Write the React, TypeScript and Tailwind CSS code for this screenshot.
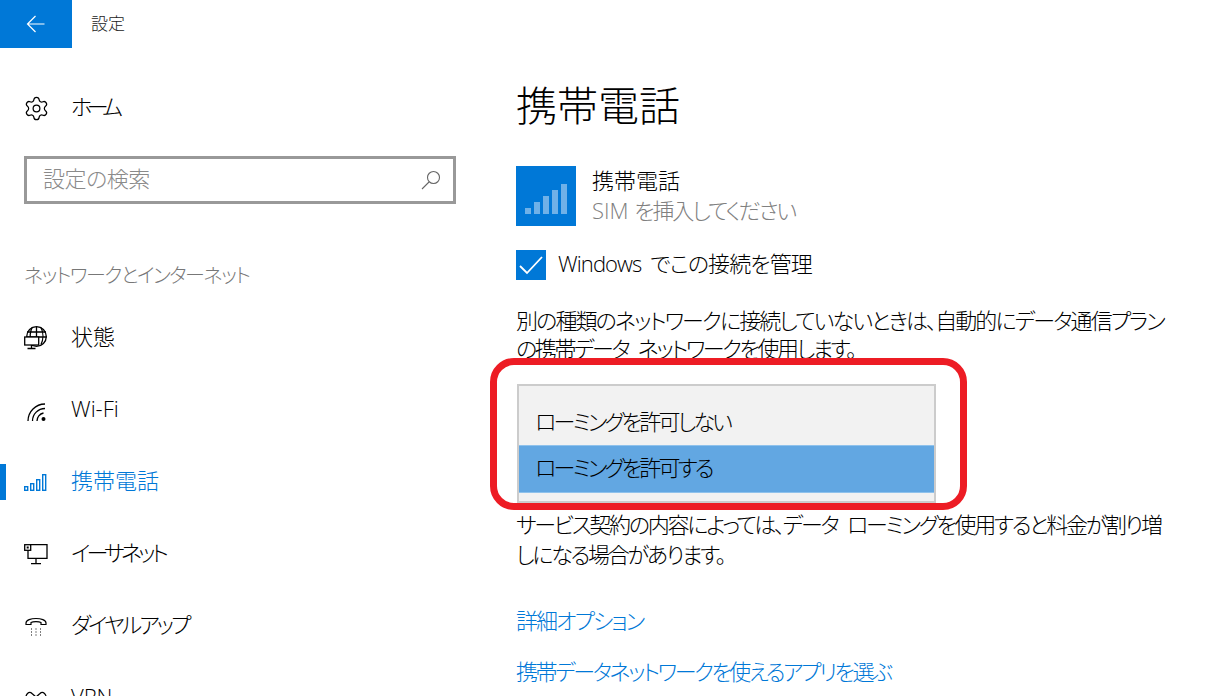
import { ReactNode } from 'react';
import { Settings } from 'lucide-react';

const FONT = '"Open Sans", "Noto Sans CJK JP", sans-serif';

function SignalBars() {
  return (
    <svg width="24" height="20" viewBox="0 0 24 20" fill="none" stroke="currentColor" strokeWidth="1.4">
      <rect x="0.7" y="14.700" width="3" height="3.600" />
      <rect x="6.700" y="11.700" width="3" height="6.600" />
      <rect x="12.700" y="7.700" width="3" height="10.600" />
      <rect x="18.700" y="2.700" width="3" height="15.600" />
    </svg>
  );
}

function StatusIcon() {
  return (
    <svg width="24" height="24" viewBox="0 0 24 24" fill="none" stroke="currentColor" strokeWidth="1.300">
      <circle cx="12.500" cy="10.500" r="9.800" />
      <path d="M3 6h19M2.700 11h20M8 1.500c-2 5-2 10-.5 12M17 1.500c2.500 5 2.500 12 0 17M12.500 .7v10" />
      <rect x="0.700" y="11" width="14" height="8" fill="white" />
      <path d="M7.500 19v3M3.500 22.500h8" />
    </svg>
  );
}

function WifiIcon() {
  return (
    <svg width="24" height="24" viewBox="0 0 24 24" fill="none" stroke="currentColor" strokeWidth="1.300">
      <path d="M4 23A17 17 0 0 1 21 6" />
      <path d="M8.500 23A12.500 12.500 0 0 1 21 10.500" />
      <path d="M13 23A8 8 0 0 1 19.500 15" />
      <circle cx="19.500" cy="21" r="2" fill="currentColor" stroke="none" />
    </svg>
  );
}

function EthernetIcon() {
  return (
    <svg width="24" height="24" viewBox="0 0 24 24" fill="none" stroke="currentColor" strokeWidth="1.300">
      <path d="M6 2.700h17v13.600H4V8" />
      <rect x="0.700" y="2.700" width="6" height="5.600" />
      <rect x="2.700" y="4.500" width="2" height="2" fill="currentColor" stroke="none" />
      <path d="M12 16.500v5M7 21.700h10" />
    </svg>
  );
}

function DialIcon() {
  return (
    <svg width="24" height="24" viewBox="0 0 24 24" fill="none" stroke="currentColor" strokeWidth="1.200">
      <path d="M2 9c0-6 20-6 20 0v1.500h-5V8.500c-2-1.200-8-1.200-10 0v2H2z" />
      <path d="M7 15h1M11.500 15h1M16 15h1M7 18h1M11.500 18h1M16 18h1M7 21h1M11.500 21h1M16 21h1" />
    </svg>
  );
}

function VpnIcon() {
  return (
    <svg width="24" height="24" viewBox="0 0 24 24" fill="none" stroke="currentColor" strokeWidth="1.300">
      <path d="M12 11L8 7.500C6.500 6 5 6 3.500 7.500 1.500 9.500 1.500 12.500 3.500 14.500 5 16 6.500 16 8 14.500L16 7.500C17.500 6 19 6 20.500 7.500 22.500 9.500 22.500 12.500 20.500 14.500 19 16 17.500 16 16 14.500L12 11" />
    </svg>
  );
}

function NavItem({ icon, label, active, tracking }: { icon: ReactNode; label: string; active?: boolean; tracking?: string }) {
  return (
    <div className={`h-[72px] flex items-center pl-6 relative ${active ? 'text-[#0078d7]' : 'text-black'}`}>
      {active && <div className="absolute left-0 top-[18px] w-[6px] h-[36px] bg-[#0078d7]" />}
      <div className="w-6 h-6 flex items-center justify-center mr-[23px] shrink-0">{icon}</div>
      <span className={`text-[22px] leading-[30px] -mt-[5px] font-light ${tracking ?? ''}`}>{label}</span>
    </div>
  );
}

export default function App() {
  return (
    <div
      className="relative w-[1212px] h-[696px] overflow-hidden bg-white flex [font-feature-settings:'palt'] font-light"
      style={{ fontFamily: FONT }}
    >
      {/* Sidebar */}
      <div className="w-[480px] shrink-0">
        <div className="h-12 flex items-center">
          <div className="w-[72px] h-12 bg-[#0078d7] flex items-center justify-center text-white">
            <svg width="20" height="18" viewBox="0 0 20 18" fill="none" stroke="currentColor" strokeWidth="1.200">
              <path d="M18.500 9H1.500M9.500 1L1.500 9l8 8" />
            </svg>
          </div>
          <span className="ml-[19px] text-[17px] text-[#222]">設定</span>
        </div>

        <div className="mt-6 h-[72px] flex items-center pl-6 text-black">
          <Settings size={27} strokeWidth={1.100} className="mr-[21px] -ml-[1px]" />
          <span className="text-[22px] leading-[30px] -mt-1 tracking-[-5.500px]">ホーム</span>
        </div>

        <div className="mt-3 mx-6 h-12 border-[3px] border-[#999] flex items-center justify-between pl-[16px] pr-3">
          <span className="text-[22px] leading-[30px] -mt-1 text-[#8a8a8a] tracking-[-0.5px]">設定の検索</span>
          <svg width="20" height="20" viewBox="0 0 20 20" fill="none" stroke="#666" strokeWidth="1.100">
            <circle cx="12.500" cy="7.500" r="6" />
            <path d="M8 12L1 19" />
          </svg>
        </div>

        <div className="mt-[55px] pl-6 text-[20px] leading-[34px] text-[#777] tracking-[-1.500px]">ネットワークとインターネット</div>

        <div className="mt-[9px]">
          <NavItem icon={<StatusIcon />} label="状態" />
          <NavItem icon={<WifiIcon />} label="Wi-Fi" />
          <NavItem icon={<SignalBars />} label="携帯電話" active />
          <NavItem icon={<EthernetIcon />} label="イーサネット" tracking="tracking-[-3.800px]" />
          <NavItem icon={<DialIcon />} label="ダイヤルアップ" tracking="tracking-[-3px]" />
          <NavItem icon={<VpnIcon />} label="VPN" />
        </div>
      </div>

      {/* Content */}
      <div className="pl-9 w-[690px]">
        <h1 className="mt-[79px] text-[41px] leading-[52px] font-light text-black">携帯電話</h1>

        <div className="mt-[35px] flex items-center">
          <div className="w-[60px] h-[60px] bg-[#0078d7] flex items-end justify-center pb-[12px] gap-[3px]">
            <div className="w-[6px] h-[6px] bg-[#6fb1e8]" />
            <div className="w-[6px] h-[12px] bg-[#6fb1e8]" />
            <div className="w-[6px] h-[18px] bg-[#6fb1e8]" />
            <div className="w-[6px] h-[24px] bg-[#6fb1e8]" />
            <div className="w-[6px] h-[30px] bg-[#6fb1e8]" />
          </div>
          <div className="ml-4 -mt-[2px]">
            <div className="text-[22px] leading-[30px] text-black">携帯電話</div>
            <div className="text-[22px] leading-[30px] text-[#808080] tracking-[-2.100px]">
              <span className="tracking-normal">SIM </span>を挿入してください
            </div>
          </div>
        </div>

        <div className="mt-6 flex items-center">
          <div className="w-[30px] h-[30px] bg-[#0078d7] flex items-center justify-center text-white">
            <svg width="26" height="20" viewBox="0 0 26 20" fill="none" stroke="currentColor" strokeWidth="1.800">
              <path d="M2 11l7 7L24 2" />
            </svg>
          </div>
          <span className="ml-3 -mt-1 text-[22px] leading-[30px] text-black tracking-[-0.900px] [word-spacing:4px]">Windows でこの接続を管理</span>
        </div>

        <p className="mt-[26px] whitespace-nowrap text-[22px] leading-[28px] text-black tracking-[-1.900px]">
          別の種類のネットワークに接続していないときは、自動的にデータ通信プラン
          <br />
          <span className="tracking-[-2.400px] [word-spacing:6px]">の携帯データ ネットワークを使用します。</span>
        </p>

        <div className="mt-[22px] ml-px w-[419px] h-[119px] border-2 border-[#ccc] bg-[#f2f2f2] text-[22px] leading-[30px] text-black flex flex-col tracking-[-2.800px]">
          <div className="h-[59px] shrink-0 flex items-end pb-[9px] pl-[16px]">ローミングを許可しない</div>
          <div className="h-12 shrink-0 flex items-center pb-1 pl-[16px] bg-[#62a7e2] border-y border-[#8fc2ec]">ローミングを許可する</div>
        </div>

        <p className="mt-[6px] whitespace-nowrap text-[22px] leading-[30px] text-black tracking-[-2.250px] [word-spacing:6px]">
          サービス契約の内容によっては、データ ローミングを使用すると料金が割り増
          <br />
          しになる場合があります。
        </p>

        <div className="mt-[36px] text-[22px] leading-[30px] text-[#0078d7] tracking-[-1.900px]">詳細オプション</div>
        <div className="mt-[21px] text-[22px] leading-[30px] text-[#0078d7] tracking-[-2.400px]">携帯データネットワークを使えるアプリを選ぶ</div>
      </div>

      {/* Red annotation */}
      <div className="absolute left-[490px] top-[358px] w-[477px] h-[152px] border-[7px] border-[#ed1c24] rounded-[24px]" />
    </div>
  );
}
